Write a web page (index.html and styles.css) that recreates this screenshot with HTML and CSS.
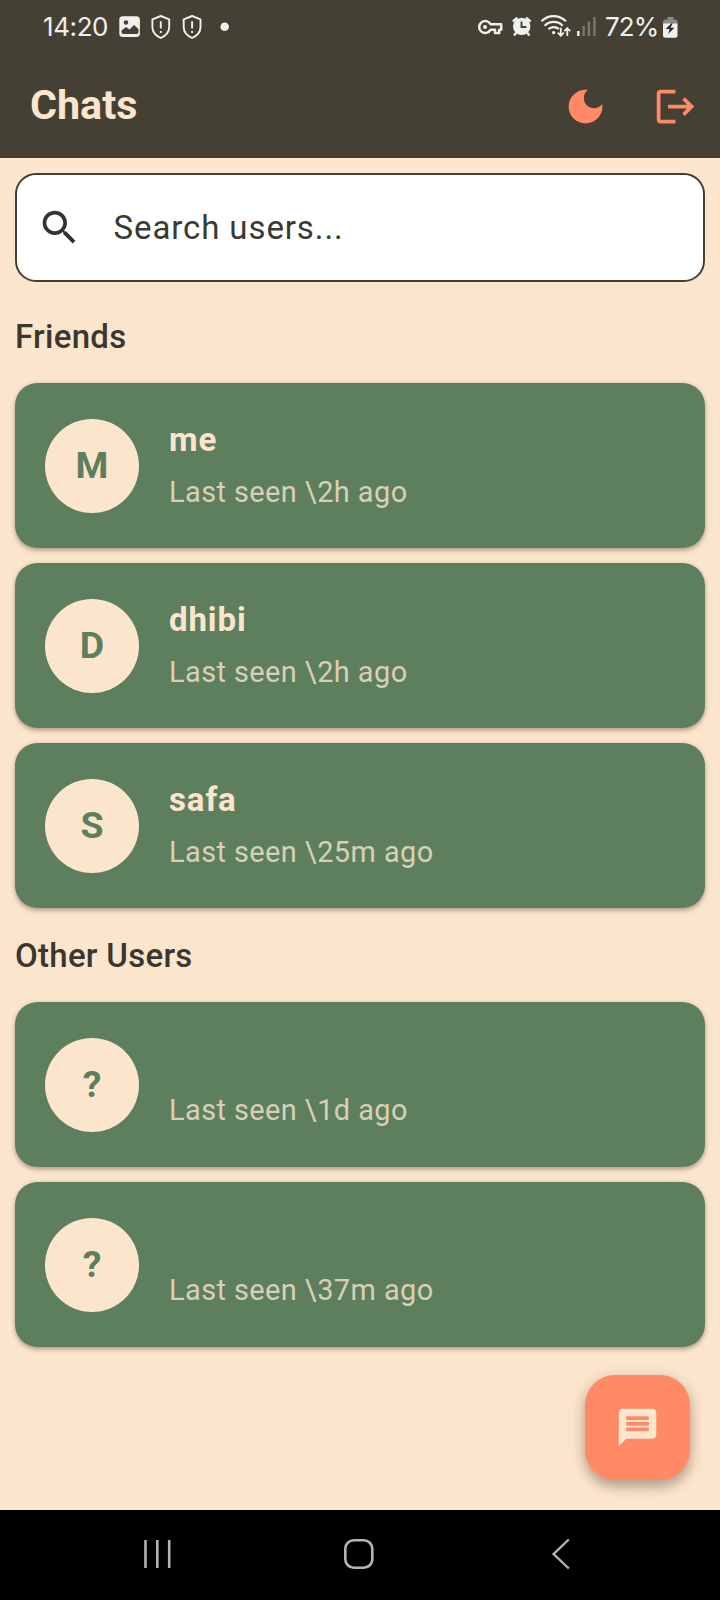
FILE: index.html
```html
<!DOCTYPE html>
<html lang="en">
<head>
<meta charset="utf-8">
<title>Chats</title>
<link rel="stylesheet" href="styles.css">
</head>
<body>
<div class="screen">
  <header class="header">
    <div class="status-bar">
      <span class="clock">14:20</span>
      <svg class="notifications" width="116" height="28" viewBox="118 13 116 28" fill="none">
        <rect x="119.3" y="16.3" width="20.6" height="20.8" rx="3.5" fill="#f0f0ee"/>
        <circle cx="126" cy="22.500" r="2.2" fill="#454034"/>
        <path d="M121.500 30.500l4.500-3.500 3.500 2.500 4.500-4.500 4.500 4v3q0 2-2 2h-13q-2 0-2-2z" fill="#454034"/>
        <g id="shield" stroke="#f0f0ee" stroke-width="1.900" stroke-linejoin="round">
          <path d="M160.800 16l8.400 3.300v7.700c0 5.300-3.600 8.800-8.400 11-4.800-2.200-8.400-5.700-8.400-11v-7.700z"/>
          <path d="M160.800 21.300v7.200M160.800 31v2.100"/>
        </g>
        <use href="#shield" x="31.300"/>
        <circle cx="224.700" cy="26.800" r="4.300" fill="#f0f0ee"/>
      </svg>
      <svg class="indicators" width="120" height="28" viewBox="477 13 120 28" fill="none">
        <g stroke="#f0f0ee" stroke-width="2.500">
          <path d="M490.500 24.200a6 6 0 1 0 0 5.600h4.500v3.200h4.200v-3.200h2v-5.600z" stroke-linejoin="round"/>
          <circle cx="485" cy="27" r="2" fill="#f0f0ee" stroke="none"/>
        </g>
        <circle cx="521.700" cy="26.400" r="8.700" fill="#f0f0ee"/>
        <path d="M512.800 21.500l4.600-3.700M530.600 21.500l-4.600-3.700M516.300 32.500l-2.300 3M527.100 32.500l2.300 3" stroke="#f0f0ee" stroke-width="2.400"/>
        <path d="M521.500 21.500v5.500h4.800" stroke="#454034" stroke-width="1.900"/>
        <g stroke="#f0f0ee" stroke-width="2.200">
          <path d="M541.500 21.300c7-6.800 17-6.800 24.500 0M544.700 25.700c5-5 13-5 18 0M548.500 29.300c2.500-2.800 7.500-2.800 10.500-.300"/>
          <circle cx="553.600" cy="32.600" r="1.700" fill="#f0f0ee" stroke="none"/>
          <path d="M560.800 27.800v7.700M557.800 32.700l3 3 3-3M567.300 36v-7.600M564.300 31.200l3-3 3 3" stroke-width="1.800"/>
        </g>
        <path d="M578.300 36v-5" stroke="#f0f0ee" stroke-width="2.500"/>
        <path d="M583.600 36v-10M588.900 36v-14.500M594.400 36v-19" stroke="#7c786e" stroke-width="2.400"/>
      </svg>
      <span class="level">72%</span>
      <svg class="battery" width="16" height="23" viewBox="662 15 16 23">
        <path d="M667.500 16h6v2.500h1.500q2.500 0 2.500 2.500v2h-14.500v-2q0-2.500 2.500-2.500h2z" fill="#8d8a82"/>
        <path d="M663 22.500h14.500v11.800q0 2.500-2.500 2.500h-9.500q-2.500 0-2.500-2.500z" fill="#f0f0ee"/>
        <path d="M671.500 22.200l-5.700 5.800h3.800l-1.300 5 6-6.200h-3.900l2.400-4.600z" fill="#252525"/>
      </svg>
    </div>
    <div class="app-bar">
      <h1 class="title">Chats</h1>
      <svg class="action" viewBox="0 0 24 24"><path d="M12 3c-4.970 0-9 4.030-9 9s4.030 9 9 9 9-4.030 9-9c0-.46-.04-.92-.1-1.360-.98 1.370-2.580 2.260-4.400 2.260-2.980 0-5.400-2.420-5.400-5.400 0-1.810.89-3.420 2.260-4.400-.44-.06-.9-.1-1.360-.1z"/></svg>
      <svg class="action" viewBox="0 0 24 24"><path d="M17 7l-1.410 1.410L18.170 11H8v2h10.170l-2.580 2.580L17 17l5-5zM4 5h8V3H4c-1.100 0-2 .9-2 2v14c0 1.100.9 2 2 2h8v-2H4V5z"/></svg>
    </div>
  </header>

  <main class="content">
    <div class="search">
      <svg class="search-icon" viewBox="0 0 24 24"><path d="M15.500 14h-.79l-.28-.27C15.410 12.590 16 11.110 16 9.500 16 5.910 13.090 3 9.500 3S3 5.910 3 9.500 5.910 16 9.500 16c1.610 0 3.090-.59 4.230-1.570l.27.28v.79l5 4.990L20.490 19l-4.990-5zm-6 0C7.010 14 5 11.990 5 9.500S7.010 5 9.500 5 14 7.010 14 9.500 11.990 14 9.500 14z"/></svg>
      <span class="placeholder">Search users...</span>
    </div>

    <h2 class="section">Friends</h2>
    <div class="list">
      <div class="card"><div class="avatar">M</div><div class="info"><div class="name">me</div><div class="seen">Last seen \2h ago</div></div></div>
      <div class="card"><div class="avatar">D</div><div class="info"><div class="name">dhibi</div><div class="seen">Last seen \2h ago</div></div></div>
      <div class="card"><div class="avatar">S</div><div class="info"><div class="name">safa</div><div class="seen">Last seen \25m ago</div></div></div>
    </div>

    <h2 class="section">Other Users</h2>
    <div class="list">
      <div class="card"><div class="avatar">?</div><div class="info"><div class="name empty"></div><div class="seen">Last seen \1d ago</div></div></div>
      <div class="card"><div class="avatar">?</div><div class="info"><div class="name empty"></div><div class="seen">Last seen \37m ago</div></div></div>
    </div>

    <div class="fab">
      <svg class="fab-icon" viewBox="0 0 24 24"><path d="M20 2H4c-1.100 0-1.990.9-1.990 2L2 22l4-4h14c1.100 0 2-.9 2-2V4c0-1.100-.9-2-2-2zM6 9h12v2H6V9zm12 5H6v-2h12v2zm0-6H6V6h12v2z"/></svg>
    </div>
  </main>

  <nav class="nav-bar">
    <svg width="30" height="32" viewBox="142 1538 30 32"><path d="M145.500 1540v28M157.300 1540v28M169.200 1540v28" stroke="#b4b4b4" stroke-width="2.600"/></svg>
    <svg width="32" height="32" viewBox="343 1538 32 32"><rect x="345.300" y="1540.300" width="27" height="27.400" rx="8.500" fill="none" stroke="#b4b4b4" stroke-width="2.600"/></svg>
    <svg width="22" height="32" viewBox="550 1538 22 32"><path d="M568.800 1539.500l-15.200 14.500 15.200 14.500" fill="none" stroke="#b4b4b4" stroke-width="2.400"/></svg>
  </nav>
</div>
</body>
</html>
```

FILE: styles.css
```css
* { box-sizing: border-box; }
body {
  margin: 0;
  font-family: Roboto, "Liberation Sans", sans-serif;
  background: #fce5cd;
}
svg { display: block; flex: none; }
.screen {
  width: 720px;
  height: 1600px;
  display: flex;
  flex-direction: column;
  background: #fce5cd;
}
.header {
  height: 158px;
  flex: none;
  background: #454034;
}
.status-bar {
  height: 53px;
  padding: 1px 42px 0 43px;
  display: flex;
  align-items: center;
  color: #f0f0ee;
  font-family: Inter, "Open Sans", sans-serif;
  font-size: 26px;
  line-height: 30px;
}
.clock { width: 75px; letter-spacing: -0.4px; }
.notifications { margin-right: auto; }
.level { width: 65px; padding-left: 8px; white-space: nowrap; letter-spacing: -0.9px; }
.app-bar {
  height: 105px;
  padding: 1px 22.500px 0 30px;
  display: flex;
  align-items: center;
}
.title {
  margin: 0 auto 0 0;
  padding-bottom: 3px;
  font-size: 41.250px;
  font-weight: 700;
  line-height: 52px;
  color: #fce5cd;
}
.action { width: 45px; height: 45px; fill: #ff8a65; }
.action + .action { margin-left: 45px; }
.content {
  position: relative;
  flex: 1;
  padding: 15px 15px 0;
}
.search {
  height: 109px;
  padding-left: 20px;
  display: flex;
  align-items: center;
  background: #fff;
  border: 2px solid #454034;
  border-radius: 21px;
}
.search-icon { width: 45px; height: 45px; fill: #33342b; }
.placeholder {
  padding-left: 31.500px;
  font-size: 33px;
  line-height: 47px;
  letter-spacing: 0.900px;
  color: #3a3a32;
}
.section {
  margin: 0;
  height: 94px;
  padding-top: 1px;
  font-size: 33px;
  font-weight: 500;
  line-height: 94px;
  letter-spacing: 0.280px;
  color: #3a372e;
}
.search + .section { margin-top: 7px; }
.list { display: flex; flex-direction: column; gap: 15px; }
.card {
  height: 165px;
  padding-left: 30px;
  display: flex;
  align-items: center;
  gap: 30px;
  background: #5e7f5e;
  border-radius: 22.500px;
  box-shadow: 0 3px 4px rgba(60, 45, 30, 0.300), 0 0 4px rgba(60, 45, 30, 0.140);
}
.avatar {
  width: 94px;
  height: 94px;
  border-radius: 50%;
  background: #fce5cd;
  color: #5e7f5e;
  font-size: 37.500px;
  font-weight: 700;
  line-height: 93px;
  text-align: center;
}
.info { padding-bottom: 2px; }
.name {
  height: 55px;
  font-size: 33px;
  font-weight: 700;
  line-height: 47px;
  letter-spacing: 0.900px;
  color: #fce5cd;
}
.name.empty { height: 52px; }
.seen {
  font-size: 28.900px;
  line-height: 42px;
  letter-spacing: 0.440px;
  color: #d8d0b6;
}
.fab {
  position: absolute;
  right: 30px;
  bottom: 30px;
  width: 105px;
  height: 105px;
  display: grid;
  place-items: center;
  background: #ff8a65;
  border-radius: 30px;
  box-shadow: 0 7px 12px rgba(60, 45, 30, 0.300), 0 2px 16px rgba(60, 45, 30, 0.140);
}
.fab-icon { width: 45px; height: 45px; fill: #fce5cd; }
.nav-bar {
  height: 90px;
  flex: none;
  padding: 0 148px 2px 142px;
  display: grid;
  grid-template-columns: 201px 207px 22px;
  align-items: center;
  background: #000;
}
```
